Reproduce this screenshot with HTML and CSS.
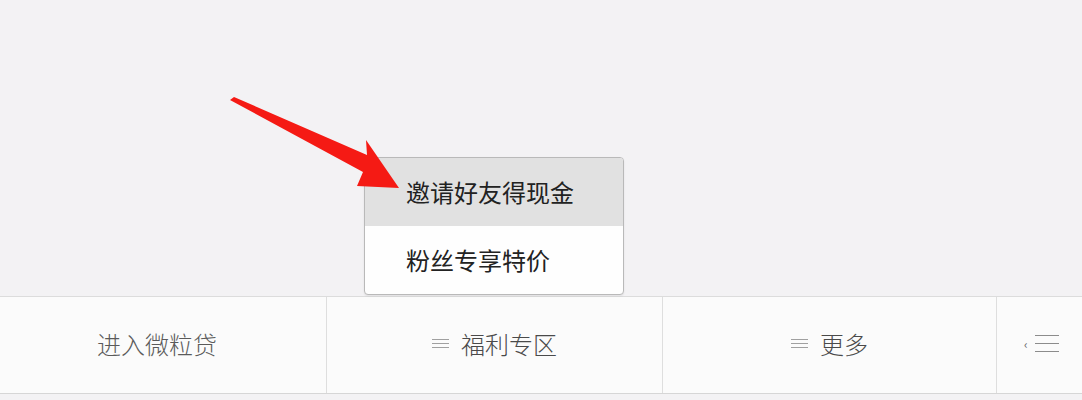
FILE: index.html
```html
<!DOCTYPE html>
<html lang="zh">
<head>
<meta charset="utf-8">
<link rel="stylesheet" href="styles.css">
</head>
<body>
<div class="page">
  <div class="top"></div>
  <nav class="bar">
    <div class="cell first"><span class="label">进入微粒贷</span></div>
    <div class="cell"><span class="lines"><i></i><i></i><i></i></span><span class="label dark">福利专区</span></div>
    <div class="cell"><span class="lines"><i></i><i></i><i></i></span><span class="label dark">更多</span></div>
    <div class="cell last"><span class="caret">‹</span><span class="lines big"><i></i><i></i><i></i></span></div>
  </nav>
  <div class="menu">
    <div class="item active">邀请好友得现金</div>
    <div class="item">粉丝专享特价</div>
  </div>
  <svg class="arrow" width="200" height="110" viewBox="0 0 200 110">
    <polygon points="2,8 6,5 139,63 138,48 171,96 129,94 135,80" fill="#f51a14"/>
  </svg>
</div>
</body>
</html>
```
FILE: styles.css
```css
html, body {
  margin: 0;
  padding: 0;
}
body {
  background: #f3f2f4;
  font-family: "Noto Sans CJK SC", "Noto Sans", sans-serif;
  width: 1082px;
  height: 400px;
  overflow: hidden;
}
.page {
  position: relative;
  width: 1082px;
  height: 400px;
}
.top {
  height: 296px;
}
.bar {
  display: grid;
  grid-template-columns: 326px 336px 334px 1fr;
  height: 96px;
  background: #fbfbfb;
  border-top: 1px solid #dcdcdc;
  border-bottom: 1px solid #d6d6d6;
}
.cell {
  display: flex;
  align-items: center;
  justify-content: center;
  gap: 12px;
  border-left: 1px solid #dedede;
}
.cell.first {
  border-left: none;
  padding-right: 12px;
}
.label {
  font-size: 24px;
  font-weight: 300;
  color: #5a5a5a;
  padding-bottom: 4px;
}
.label.dark {
  color: #4a4a4a;
}
.lines {
  display: flex;
  flex-direction: column;
  gap: 3px;
  width: 17px;
  padding-bottom: 4px;
}
.lines i {
  display: block;
  height: 1px;
  background: #a0a0a0;
}
.lines.big {
  width: 24px;
  gap: 7px;
}
.lines.big i {
  background: #8c8c8c;
}
.last {
  justify-content: flex-start;
  padding-left: 27px;
  gap: 7px;
}
.caret {
  font-size: 12px;
  color: #666;
  padding-bottom: 4px;
}
.menu {
  position: absolute;
  left: 364px;
  top: 157px;
  width: 258px;
  border: 1px solid #b9b9b9;
  border-radius: 4px;
  background: #fefefe;
  overflow: hidden;
  box-shadow: 0 1px 2px rgba(0,0,0,0.08);
}
.item {
  height: 67px;
  display: flex;
  align-items: center;
  padding-left: 41px;
  font-size: 24px;
  color: #222;
  padding-bottom: 1px;
}
.item.active {
  background: #e1e1e1;
}
.arrow {
  position: absolute;
  left: 228px;
  top: 92px;
}
```
